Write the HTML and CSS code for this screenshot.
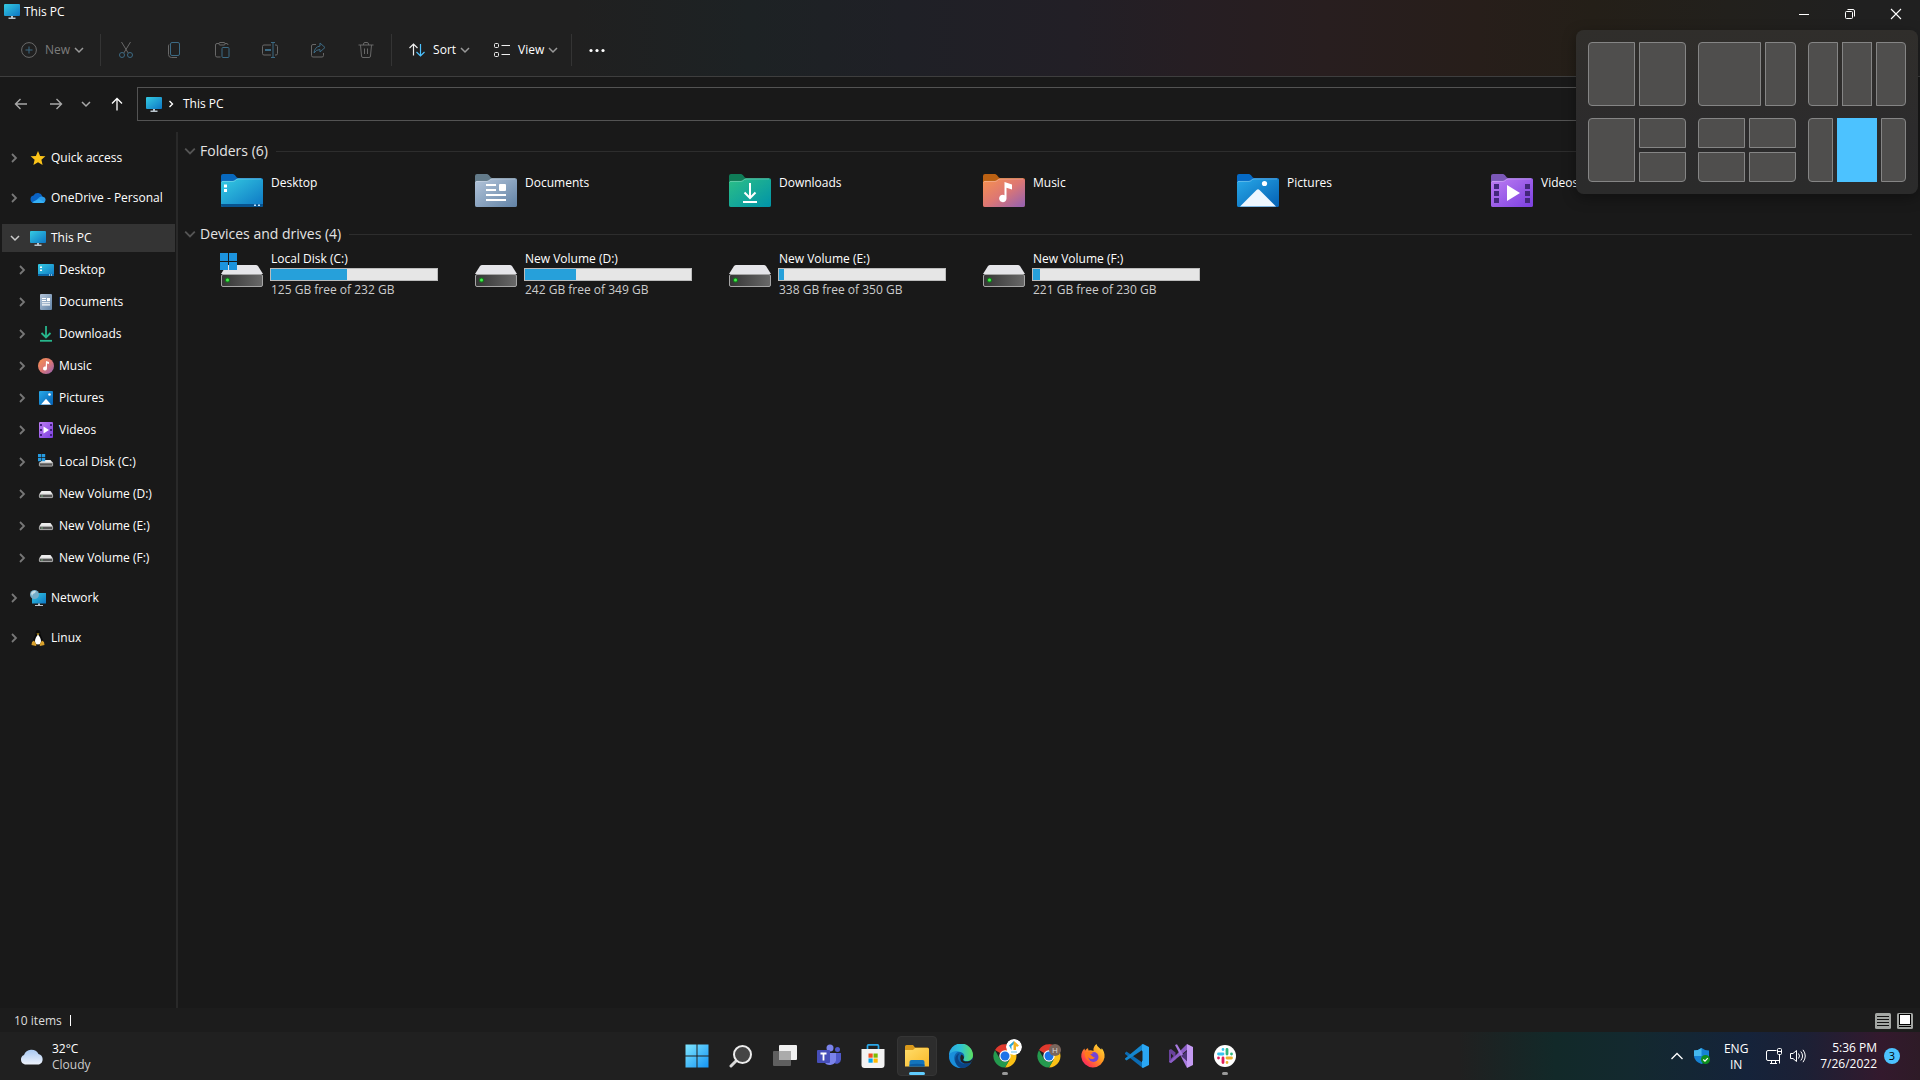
FILE: index.html
```html
<!DOCTYPE html>
<html lang="en">
<head>
<meta charset="utf-8">
<meta name="viewport" content="width=device-width, initial-scale=1">
<title>This PC</title>
<link rel="stylesheet" href="styles.css">
</head>
<body>
<svg class="sprite" aria-hidden="true">
  <defs>
    <linearGradient id="g-screen" x1="0" y1="0" x2="1" y2="1"><stop offset="0" stop-color="#35cbe2"/><stop offset="1" stop-color="#0d76c4"/></linearGradient>
    <linearGradient id="g-docs" x1="0" y1="0" x2="1" y2="1"><stop offset="0" stop-color="#b4c5da"/><stop offset="1" stop-color="#6283a6"/></linearGradient>
    <linearGradient id="g-down" x1="0" y1="0" x2="1" y2="1"><stop offset="0" stop-color="#2cbf86"/><stop offset="1" stop-color="#0093a9"/></linearGradient>
    <linearGradient id="g-music" x1="0" y1="0" x2="1" y2="1"><stop offset="0" stop-color="#f7924f"/><stop offset=".5" stop-color="#dd7773"/><stop offset="1" stop-color="#9160b4"/></linearGradient>
    <linearGradient id="g-pics" x1="0" y1="0" x2="1" y2="1"><stop offset="0" stop-color="#28a9e8"/><stop offset="1" stop-color="#0460b4"/></linearGradient>
    <linearGradient id="g-vids" x1="0" y1="0" x2="1" y2="1"><stop offset="0" stop-color="#bd7df2"/><stop offset="1" stop-color="#7b3fe0"/></linearGradient>
    <linearGradient id="g-disk" x1="0" y1="0" x2="1" y2="0"><stop offset="0" stop-color="#353535"/><stop offset="1" stop-color="#696969"/></linearGradient>
    <linearGradient id="g-win" x1="0" y1="0" x2="1" y2="1"><stop offset="0" stop-color="#7fe6ff"/><stop offset="1" stop-color="#1494f4"/></linearGradient>
    <linearGradient id="g-cloud" x1="0" y1="0" x2="0" y2="1"><stop offset="0" stop-color="#a9c9f2"/><stop offset="1" stop-color="#eef3fc"/></linearGradient>
    <linearGradient id="g-folder" x1="0" y1="0" x2="1" y2="1"><stop offset="0" stop-color="#ffdd6b"/><stop offset="1" stop-color="#f9b928"/></linearGradient>
    <linearGradient id="g-edge1" x1="0" y1="0" x2="1" y2="0"><stop offset="0" stop-color="#2aa6e4"/><stop offset=".5" stop-color="#2fc3d2"/><stop offset="1" stop-color="#5ee05c"/></linearGradient>
    <linearGradient id="g-fire" x1="1" y1="0" x2="0" y2="1"><stop offset="0" stop-color="#ffe63c"/><stop offset=".45" stop-color="#ff9420"/><stop offset=".8" stop-color="#ff3850"/><stop offset="1" stop-color="#f02a8c"/></linearGradient>

    <symbol id="chev-right" viewBox="0 0 8 10"><path d="M2 1l4 4-4 4" fill="none" stroke="currentColor" stroke-width="1.8"/></symbol>
    <symbol id="chev-down" viewBox="0 0 10 8"><path d="M1 2l4 4 4-4" fill="none" stroke="currentColor" stroke-width="1.5"/></symbol>
    <symbol id="pc" viewBox="0 0 16 16"><rect y="1" width="16" height="12" rx="1" fill="url(#g-screen)"/><path d="M7 13h2v1.500h2.500V16h-7v-1.500H7z" fill="#b9c4cc"/></symbol>
    <symbol id="star" viewBox="0 0 16 16"><path d="M8 1l2.100 4.900 5.300.400-4 3.500 1.200 5.200L8 12.200 3.400 15l1.200-5.200-4-3.500 5.300-.400z" fill="#fcc419"/></symbol>
    <symbol id="onedrive" viewBox="0 0 16 16"><path d="M4 13a3.800 3.800 0 0 1-.500-7.500 5 5 0 0 1 9 .9L8 13z" fill="#0a63c4"/><path d="M3 13l5-4.500a5 5 0 0 1 5-1.800A3.200 3.200 0 0 1 13 13z" fill="#2a9be8"/><path d="M2 12.200L9 9l5.500 3.300a3 3 0 0 1-1.500.7H4z" fill="#35b0f5"/></symbol>
    <symbol id="desk" viewBox="0 0 16 16"><rect y="2" width="16" height="12" rx="1" fill="url(#g-screen)"/><path d="M0 12h16v1a1 1 0 0 1-1 1H1a1 1 0 0 1-1-1z" fill="#0b64a4"/><path d="M2 4.500h2v1.500H2zM2 7.500h2V9H2zM11 12.500h1v1h-1zM13 12.500h1v1h-1z" fill="#fff"/></symbol>
    <symbol id="doc" viewBox="0 0 16 16"><rect x="2" width="12" height="16" rx="1" fill="url(#g-docs)"/><path d="M4 4.500h4M4 6.500h4M4 8.700h8M4 10.900h8" stroke="#fff" stroke-width="1.100"/><path d="M9 4h3v3.200H9z" fill="#fff"/></symbol>
    <symbol id="dl" viewBox="0 0 16 16"><path d="M8 0v11M3.500 7L8 11.500 12.500 7" fill="none" stroke="#27b68c" stroke-width="1.800"/><path d="M2 14.800h12" stroke="#27b68c" stroke-width="1.800"/></symbol>
    <symbol id="note" viewBox="0 0 16 16"><circle cx="8" cy="8" r="8" fill="url(#g-music)"/><path d="M8 3l3 1v2L9 5.500v5a2 2 0 1 1-1.300-1.900z" fill="#fff"/></symbol>
    <symbol id="pic" viewBox="0 0 16 16"><rect x="1" y="1" width="14" height="14" rx="1" fill="url(#g-pics)"/><path d="M3 14.500l5-5.800 5 5.800z" fill="#fff"/><circle cx="11.500" cy="4.500" r="1.300" fill="#fff"/></symbol>
    <symbol id="vid" viewBox="0 0 16 16"><rect x="1" width="14" height="16" rx="1" fill="url(#g-vids)"/><path d="M2 2h2v2H2zM2 7h2v2H2zM2 12h2v2H2zM12 2h2v2h-2zM12 7h2v2h-2zM12 12h2v2h-2z" fill="#41217e"/><path d="M5.500 4.500l5.500 3.500-5.500 3.500z" fill="#fff"/></symbol>
    <symbol id="disk" viewBox="0 0 16 16"><path d="M3.500 5h9L15 8.500H1z" fill="#ececec"/><rect x="1.400" y="8.400" width="13.200" height="3.200" rx=".5" fill="#555" stroke="#bbb" stroke-width=".9"/><path d="M3.500 9.500h1v1h-1z" fill="#8dfc9a"/></symbol>
    <symbol id="sysdisk" viewBox="0 0 16 16"><path d="M5 6h7.500L15 9H1z" fill="#ececec"/><rect x="1.400" y="8.900" width="13.200" height="3.200" rx=".5" fill="#555" stroke="#bbb" stroke-width=".9"/><path d="M0 0h3.300v3.300H0zM3.900 0h3.300v3.300H3.900zM0 3.900h3.300v3.300H0zM3.900 3.900h3.300v3.300H3.900z" fill="#269be0"/></symbol>
    <symbol id="net" viewBox="0 0 16 16"><rect x="2" y="3" width="14" height="10.500" fill="url(#g-screen)"/><path d="M8 13.500h2v1.500h3v1H5v-1h3z" fill="#b9c4cc"/><circle cx="4.500" cy="4.500" r="4.500" fill="#74aeca"/><path d="M1 3q2-3 5-2l-1 2-2 1-1 2z" fill="#c6dfe8"/></symbol>
    <symbol id="tux" viewBox="0 0 16 16"><path d="M8 0c2 0 2.500 1.500 2.500 4 .5 2.500 3 5 2.500 8l-3 3H6l-3-3c-.5-3 2-5.500 2.500-8C5.500 1.500 6 0 8 0z" fill="#0a0a0a"/><path d="M8 4.500c1.500 2 3 4 3 6.500s-1 3.500-3 3.500-3-1-3-3.500 1.500-4.500 3-6.500z" fill="#fff"/><path d="M6.500 3.500h3L8 5.200z" fill="#e9b81c"/><path d="M4 10.500l2.500 4-.5 1.500-4.500-1 .5-3zM12 10.500l-2.500 4 .5 1.500 4.500-1-.5-3z" fill="#d9a12b"/></symbol>

    <symbol id="f-base" viewBox="0 0 42 33"><path d="M0 2a2 2 0 0 1 2-2h10c2 0 3.500 4 5 4H40a2 2 0 0 1 2 2v25a2 2 0 0 1-2 2H2a2 2 0 0 1-2-2z"/></symbol>
    <symbol id="f-front" viewBox="0 0 42 33"><path d="M0 9a2 2 0 0 1 2-2h10c2 0 3-2.500 5-2.500H40a2 2 0 0 1 2 2V31a2 2 0 0 1-2 2H2a2 2 0 0 1-2-2z"/><path d="M.5 8.500Q1 7.400 2 7.400h10c2 0 3-2.500 5-2.500H40" fill="none" stroke="#fff" stroke-opacity=".35" stroke-width=".8"/></symbol>
    <symbol id="drive" viewBox="0 0 42 34"><path d="M7 12h28q1 0 2 1l5 8H0l5-8q1-1 2-1z" fill="#e5e5e9"/><rect x=".5" y="21.500" width="41" height="12" rx="1.500" fill="url(#g-disk)" stroke="#a5a5a5"/><circle cx="6.500" cy="27" r="2.600" fill="#14751d"/><circle cx="6.500" cy="27" r="1.500" fill="#43f04a"/></symbol>
    <symbol id="chrome" viewBox="0 0 24 24"><path d="M12 12L2 6.100A11.500 11.500 0 0 1 22 6.200z" fill="#e0392d"/><path d="M12 .5A11.500 11.500 0 0 1 22 6.300H12z" fill="#e0392d"/><path d="M12 6.300h10A11.500 11.500 0 0 1 12 23.500l5-8.700z" fill="#fbc116"/><path d="M2 6.200l5 8.700a5.800 5.800 0 0 0 10 0l-5 8.600A11.500 11.500 0 0 1 2 6.200z" fill="#249a4e"/><circle cx="12" cy="12" r="5.700" fill="#fff"/><circle cx="12" cy="12" r="4.500" fill="#1c73e8"/></symbol>
  </defs>
</svg>

<div class="desktop">
  <header class="header">
    <div class="titlebar">
      <svg class="ico"><use href="#pc"/></svg>
      <h1 class="title">This PC</h1>
      <div class="window-buttons">
        <button class="win-btn" aria-label="Minimize"><svg class="ico-s" viewBox="0 0 12 12"><path d="M1 6.500h10" stroke="#fff"/></svg></button>
        <button class="win-btn" aria-label="Restore"><svg class="ico-s" viewBox="0 0 12 12" fill="none" stroke="#fff"><rect x="1.500" y="3.500" width="7" height="7" rx="1"/><path d="M3.500 1.500H9A1.500 1.500 0 0 1 10.500 3v5.500"/></svg></button>
        <button class="win-btn" aria-label="Close"><svg class="ico-s" viewBox="0 0 12 12"><path d="M1 1l10 10M11 1L1 11" stroke="#fff" stroke-width="1.100"/></svg></button>
      </div>
    </div>

    <div class="toolbar" role="toolbar" aria-label="Commands">
      <button class="tool tool-new" disabled>
        <svg class="ico" viewBox="0 0 16 16" fill="none"><circle cx="8" cy="8" r="7.400" stroke="#6a6a6a"/><path d="M8 4.500v7M4.500 8h7" stroke="#3c6a84"/></svg>
        <span>New</span><svg class="chev"><use href="#chev-down"/></svg>
      </button>
      <span class="sep"></span>
      <button class="tool tool-icon" disabled aria-label="Cut"><svg class="ico" viewBox="0 0 16 16" fill="none"><path d="M3.500 0l6.700 11M12.500 0L5.800 11" stroke="#686868"/><circle cx="4" cy="13" r="2.500" stroke="#3c6a84"/><circle cx="12" cy="13" r="2.500" stroke="#3c6a84"/></svg></button>
      <button class="tool tool-icon" disabled aria-label="Copy"><svg class="ico" viewBox="0 0 16 16" fill="none"><path d="M3 2.500Q2.500 3 2.500 4v8.500a3 3 0 0 0 3 3H11" stroke="#686868"/><rect x="4.500" y=".5" width="9" height="13" rx="1.500" stroke="#3c6a84"/></svg></button>
      <button class="tool tool-icon" disabled aria-label="Paste"><svg class="ico" viewBox="0 0 16 16" fill="none"><path d="M5 1.500H3A1.500 1.500 0 0 0 1.500 3v10.500A1.500 1.500 0 0 0 3 15h3.500M11 1.500h2A1.500 1.500 0 0 1 14 3" stroke="#686868"/><rect x="5" y=".5" width="6" height="2.500" rx="1" stroke="#686868"/><rect x="8" y="5.500" width="7" height="10" rx="1" stroke="#3c6a84"/></svg></button>
      <button class="tool tool-icon" disabled aria-label="Rename"><svg class="ico" viewBox="0 0 16 16" fill="none"><path d="M9 3H2A1.500 1.500 0 0 0 .5 4.500v7A1.500 1.500 0 0 0 2 13h7M13 3h1a1.500 1.500 0 0 1 1.500 1.500v7A1.500 1.500 0 0 1 14 13h-1" stroke="#686868"/><path d="M11 .5v15M9 .5h4M9 15.500h4" stroke="#3c6a84"/><path d="M3 8h6" stroke="#3c6a84" stroke-width="2"/></svg></button>
      <button class="tool tool-icon" disabled aria-label="Share"><svg class="ico" viewBox="0 0 16 16" fill="none"><path d="M6 2.500H3A1.500 1.500 0 0 0 1.500 4v9.500A1.500 1.500 0 0 0 3 15h9a1.500 1.500 0 0 0 1.500-1.500V11" stroke="#686868"/><path d="M10 1l5 4.500L10 10V7.500Q6 7.500 4 11q.5-6 6-7z" stroke="#3c6a84"/></svg></button>
      <button class="tool tool-icon" disabled aria-label="Delete"><svg class="ico" viewBox="0 0 16 16" fill="none" stroke="#686868"><path d="M.5 3h15M5.500 3V2a1.500 1.500 0 0 1 1.500-1.500h2A1.500 1.500 0 0 1 10.500 2v1M2.500 3l1 11a1.500 1.500 0 0 0 1.500 1.500h6a1.500 1.500 0 0 0 1.500-1.500l1-11M6.500 6.500v5.500M9.500 6.500v5.500"/></svg></button>
      <span class="sep"></span>
      <button class="tool tool-menu">
        <svg class="ico" viewBox="0 0 16 16" fill="none"><path d="M4.500 13.500V2M.5 6l4-4 4 4" stroke="#eee" stroke-width="1.200"/><path d="M11.500 2v12M7.500 10l4 4 4-4" stroke="#4cc2ff" stroke-width="1.200"/></svg>
        <span>Sort</span><svg class="chev"><use href="#chev-down"/></svg>
      </button>
      <button class="tool tool-menu">
        <svg class="ico" viewBox="0 0 16 16" fill="none" stroke="#eee"><rect x=".5" y="1.500" width="4" height="4" rx="1"/><rect x=".5" y="10.500" width="4" height="4" rx="1"/><path d="M7.500 3.500H16M7.500 12.500H16"/></svg>
        <span>View</span><svg class="chev"><use href="#chev-down"/></svg>
      </button>
      <span class="sep"></span>
      <button class="tool tool-icon" aria-label="See more"><svg class="ico" viewBox="0 0 16 16" fill="#fff"><circle cx="2" cy="8.500" r="1.600"/><circle cx="8" cy="8.500" r="1.600"/><circle cx="14" cy="8.500" r="1.600"/></svg></button>
    </div>
  </header>

  <nav class="addressbar" aria-label="Location">
    <button class="nav-btn" aria-label="Back"><svg class="ico-m" viewBox="0 0 14 14"><path d="M13 7H1.500M6.500 2l-5 5 5 5" fill="none" stroke="#a8a8a8" stroke-width="1.400"/></svg></button>
    <button class="nav-btn" aria-label="Forward"><svg class="ico-m" viewBox="0 0 14 14"><path d="M1 7h11.500M7.500 2l5 5-5 5" fill="none" stroke="#a8a8a8" stroke-width="1.400"/></svg></button>
    <button class="nav-btn nav-btn-narrow" aria-label="Recent locations"><svg class="chev-grey"><use href="#chev-down"/></svg></button>
    <button class="nav-btn" aria-label="Up"><svg class="ico-m" viewBox="0 0 14 14"><path d="M7 13.500V1.500M2 6.500l5-5 5 5" fill="none" stroke="#fff" stroke-width="1.300"/></svg></button>
    <div class="address">
      <svg class="ico"><use href="#pc"/></svg>
      <svg class="crumb"><use href="#chev-right"/></svg>
      <a href="#" class="crumb-link">This PC</a>
    </div>
  </nav>

  <div class="body">
    <nav class="sidebar" aria-label="Folders">
      <ul class="tree">
        <li><a class="node" href="#"><svg class="twist"><use href="#chev-right"/></svg><svg class="ico"><use href="#star"/></svg>Quick access</a></li>
        <li><a class="node" href="#"><svg class="twist"><use href="#chev-right"/></svg><svg class="ico"><use href="#onedrive"/></svg>OneDrive - Personal</a></li>
        <li>
          <a class="node selected" href="#" aria-current="page"><svg class="twist twist-open"><use href="#chev-down"/></svg><svg class="ico"><use href="#pc"/></svg>This PC</a>
          <ul class="subtree">
            <li><a class="node" href="#"><svg class="twist"><use href="#chev-right"/></svg><svg class="ico"><use href="#desk"/></svg>Desktop</a></li>
            <li><a class="node" href="#"><svg class="twist"><use href="#chev-right"/></svg><svg class="ico"><use href="#doc"/></svg>Documents</a></li>
            <li><a class="node" href="#"><svg class="twist"><use href="#chev-right"/></svg><svg class="ico"><use href="#dl"/></svg>Downloads</a></li>
            <li><a class="node" href="#"><svg class="twist"><use href="#chev-right"/></svg><svg class="ico"><use href="#note"/></svg>Music</a></li>
            <li><a class="node" href="#"><svg class="twist"><use href="#chev-right"/></svg><svg class="ico"><use href="#pic"/></svg>Pictures</a></li>
            <li><a class="node" href="#"><svg class="twist"><use href="#chev-right"/></svg><svg class="ico"><use href="#vid"/></svg>Videos</a></li>
            <li><a class="node" href="#"><svg class="twist"><use href="#chev-right"/></svg><svg class="ico"><use href="#sysdisk"/></svg>Local Disk (C:)</a></li>
            <li><a class="node" href="#"><svg class="twist"><use href="#chev-right"/></svg><svg class="ico"><use href="#disk"/></svg>New Volume (D:)</a></li>
            <li><a class="node" href="#"><svg class="twist"><use href="#chev-right"/></svg><svg class="ico"><use href="#disk"/></svg>New Volume (E:)</a></li>
            <li><a class="node" href="#"><svg class="twist"><use href="#chev-right"/></svg><svg class="ico"><use href="#disk"/></svg>New Volume (F:)</a></li>
          </ul>
        </li>
        <li><a class="node" href="#"><svg class="twist"><use href="#chev-right"/></svg><svg class="ico"><use href="#net"/></svg>Network</a></li>
        <li><a class="node" href="#"><svg class="twist"><use href="#chev-right"/></svg><svg class="ico"><use href="#tux"/></svg>Linux</a></li>
      </ul>
    </nav>

    <main class="content">
      <section>
        <h2 class="group-title"><svg class="group-chev"><use href="#chev-down"/></svg>Folders (6)</h2>
        <div class="grid folders">
          <a class="item" href="#"><svg class="folder" viewBox="0 0 42 33"><use href="#f-base" fill="#0868bd"/><use href="#f-front" fill="url(#g-screen)"/><path d="M0 30h42v1a2 2 0 0 1-2 2H2a2 2 0 0 1-2-2z" fill="#08538f"/><path d="M3 10.500h3v3H3zM3 15h3v3H3z" fill="#fff"/><path d="M33 30.500h2v1.500h-2zM37 30.500h2v1.500h-2z" fill="#bfe4ff"/></svg><span>Desktop</span></a>
          <a class="item" href="#"><svg class="folder" viewBox="0 0 42 33"><use href="#f-base" fill="#637b8a"/><use href="#f-front" fill="url(#g-docs)"/><path d="M11 11h10M11 16h10M11 21h20M11 26h20" stroke="#fff" stroke-width="2"/><rect x="24" y="10" width="7" height="7" rx="1" fill="#fff"/></svg><span>Documents</span></a>
          <a class="item" href="#"><svg class="folder" viewBox="0 0 42 33"><use href="#f-base" fill="#0f7c57"/><use href="#f-front" fill="url(#g-down)"/><path d="M21 9v15M15.500 18.500l5.500 5.500 5.500-5.500M14 28h14" fill="none" stroke="#fff" stroke-width="2"/></svg><span>Downloads</span></a>
          <a class="item" href="#"><svg class="folder" viewBox="0 0 42 33"><use href="#f-base" fill="#bb6113"/><use href="#f-front" fill="url(#g-music)"/><path d="M21.500 8l7.500 2.500v5l-5.500-1.800v11a3.700 3.700 0 1 1-2-3.500z" fill="#fff"/></svg><span>Music</span></a>
          <a class="item" href="#"><svg class="folder" viewBox="0 0 42 33"><use href="#f-base" fill="#056ac6"/><use href="#f-front" fill="url(#g-pics)"/><path d="M3 32.500L19.500 16q1.500-1.500 3 0L39 32.500z" fill="#eef7ff"/><circle cx="27.500" cy="9.500" r="2.600" fill="#fff"/></svg><span>Pictures</span></a>
          <a class="item" href="#"><svg class="folder" viewBox="0 0 42 33"><use href="#f-base" fill="#7b58b8"/><use href="#f-front" fill="url(#g-vids)"/><path d="M3 10h5v5H3zM3 17h5v5H3zM3 24h5v5H3zM34 10h5v5h-5zM34 17h5v5h-5zM34 24h5v5h-5z" fill="#43277c"/><path d="M16 11l13 8-13 8z" fill="#fff"/></svg><span>Videos</span></a>
        </div>
      </section>

      <section>
        <h2 class="group-title"><svg class="group-chev"><use href="#chev-down"/></svg>Devices and drives (4)</h2>
        <div class="grid drives">
          <a class="item" href="#">
            <svg class="drive" viewBox="0 0 42 34"><use href="#drive"/><path d="M-1 0h8v8h-8zM8 0h8v8H8zM-1 9h8v8h-8zM8 9h8v8H8z" fill="#1c93dd"/></svg>
            <span class="drive-info"><span>Local Disk (C:)</span><span class="bar"><span class="fill" style="width:46%"></span></span><span class="free">125 GB free of 232 GB</span></span>
          </a>
          <a class="item" href="#">
            <svg class="drive"><use href="#drive"/></svg>
            <span class="drive-info"><span>New Volume (D:)</span><span class="bar"><span class="fill" style="width:31%"></span></span><span class="free">242 GB free of 349 GB</span></span>
          </a>
          <a class="item" href="#">
            <svg class="drive"><use href="#drive"/></svg>
            <span class="drive-info"><span>New Volume (E:)</span><span class="bar"><span class="fill" style="width:3%"></span></span><span class="free">338 GB free of 350 GB</span></span>
          </a>
          <a class="item" href="#">
            <svg class="drive"><use href="#drive"/></svg>
            <span class="drive-info"><span>New Volume (F:)</span><span class="bar"><span class="fill" style="width:4%"></span></span><span class="free">221 GB free of 230 GB</span></span>
          </a>
        </div>
      </section>
    </main>
  </div>

  <footer class="status">
    <span class="count">10 items</span>
    <div class="view-modes">
      <button class="mode" aria-label="Details view"><svg class="ico" viewBox="0 0 16 16"><rect width="16" height="16" rx="1.500" fill="#a3a6a3"/><path d="M2 3.500h12M2 6.500h12M2 9.500h12M2 12.500h12" stroke="#111"/></svg></button>
      <button class="mode" aria-label="Large icons view"><svg class="ico" viewBox="0 0 16 16"><rect width="16" height="16" rx="1.500" fill="#a3a6a3"/><rect x="2.500" y="1.500" width="11" height="10" fill="#fff" stroke="#000"/><path d="M2 13.500h12" stroke="#000"/></svg></button>
    </div>
  </footer>

  <footer class="taskbar">
    <button class="weather">
      <svg class="weather-ico" viewBox="0 0 24 16"><path d="M5 15.500a5 5 0 0 1-1-9.500 8 8 0 0 1 14.500-1A5.500 5.500 0 0 1 19 15.500z" fill="url(#g-cloud)"/></svg>
      <span><span class="line">32°C</span><span class="line dim">Cloudy</span></span>
    </button>

    <div class="apps">
      <button class="app" aria-label="Start"><svg viewBox="0 0 24 24"><path d="M.5.500h11v11H.5zM12.500.5h11v11h-11zM.5 12.500h11v11H.5zM12.500 12.500h11v11h-11z" fill="url(#g-win)"/></svg></button>
      <button class="app" aria-label="Search"><svg viewBox="0 0 24 24"><path d="M8 16l-6 6" stroke="#d8d8d8" stroke-width="3" stroke-linecap="round"/><circle cx="13.500" cy="10.500" r="8.500" fill="#454545" stroke="#ededed" stroke-width="2"/></svg></button>
      <button class="app" aria-label="Task view"><svg viewBox="0 0 24 24"><rect x="6" y="1" width="18" height="15" rx="1" fill="#f0f0f0"/><rect y="7" width="18" height="15" rx="1" fill="#5f5f5f"/><path d="M6 7h12v9H6z" fill="#ababab"/></svg></button>
      <button class="app" aria-label="Teams"><svg viewBox="0 0 24 24"><circle cx="13" cy="4" r="3.500" fill="#7b83eb"/><circle cx="20.500" cy="5.500" r="2.500" fill="#5059c9"/><path d="M16 9h8v6a4.500 4.500 0 0 1-8 3z" fill="#5059c9"/><path d="M7 9h12v7.500a6.500 6.500 0 0 1-12 1z" fill="#7b83eb"/><rect y="6" width="13" height="13" rx="1" fill="#464eb8"/><path d="M3.500 9.500h6M6.500 9.500v7" stroke="#fff" stroke-width="1.800"/></svg></button>
      <button class="app" aria-label="Store"><svg viewBox="0 0 24 24"><path d="M6.500 6V2q0-1.200 1.200-1.200h8.600q1.200 0 1.200 1.200v4" fill="none" stroke="#2aa7e8" stroke-width="1.700"/><path d="M.5 5h23v16a3 3 0 0 1-3 3h-17a3 3 0 0 1-3-3z" fill="#f3f3f3"/><path d="M7.500 9.500h4.200v4.200H7.500z" fill="#f25022"/><path d="M12.500 9.500h4.200v4.200h-4.200z" fill="#7fba00"/><path d="M7.500 14.500h4.200v4.200H7.500z" fill="#00a4ef"/><path d="M12.500 14.500h4.200v4.200h-4.200z" fill="#ffb900"/></svg></button>
      <button class="app active" aria-label="File Explorer"><svg viewBox="0 0 24 24"><path d="M0 2.500A1.500 1.500 0 0 1 1.500 1H8l2 2.500h12.500A1.500 1.500 0 0 1 24 5v8H0z" fill="#d9991b"/><path d="M0 6h8l2-2h12.500A1.500 1.500 0 0 1 24 5.500v17H0z" fill="url(#g-folder)"/><path d="M4.500 22.500V18a2 2 0 0 1 2-2h11a2 2 0 0 1 2 2v4.500z" fill="#1375bd"/><path d="M4.500 22.500h15v-2q-7.500-1.500-15 0z" fill="#0b5ba0"/></svg></button>
      <button class="app" aria-label="Edge"><svg viewBox="0 0 24 24"><circle cx="12" cy="12" r="12" fill="#0d61ad"/><path d="M0 12A12 12 0 0 1 24 11c0 4-3 6-6 6-2.500 0-4-.8-3.500-2 1.500-2 1-6-3-7C6 7 1 9 0 12z" fill="url(#g-edge1)"/><path d="M0 12C1 8 6 6.500 10 7.500c-4 1-5.500 5-4.500 9 1 3.500 4 6.500 7.500 7.400C5.500 24.500 0 19 0 12z" fill="#1a8fdb"/><path d="M11 9c-2 1.500-3 5-1 8s6.500 4 11 2l1.500-.8A12 12 0 0 1 12 24C5 22 4 11 11 9z" fill="#0a4385"/><path d="M14.500 15c-1.500 1.500 1 3 4 2.500 2.500-.3 4.500-1.500 5.200-3.500-.2 2-1 3.500-2 4.500-4 2-8.500 1-9.800-1.500q-1.500-4 .6-6.500 3.500 2 2 4.500z" fill="#202020"/></svg></button>
      <button class="app running" aria-label="Chrome, work profile"><svg viewBox="0 0 24 24"><use href="#chrome"/></svg><svg class="profile profile-large" viewBox="0 0 16 16"><circle cx="8" cy="8" r="8" fill="#fff"/><path d="M3 6.500L8 2v3L5.500 7v4z" fill="#27a5df"/><path d="M8 2l5 4.500L11 8 10 7v4H7.500V5z" fill="#f4b223"/><path d="M5 13h6" stroke="#69bfe6"/></svg></button>
      <button class="app" aria-label="Chrome, profile H"><svg viewBox="0 0 24 24"><use href="#chrome"/></svg><span class="profile">H</span></button>
      <button class="app" aria-label="Firefox"><svg viewBox="0 0 24 24"><path d="M15.500 0c.5 2.500 3 3.500 4.500 5.500 1-.2.500-1 .5-1.500 2 2 3.500 5.500 3 9.500A11.700 11.700 0 0 1 .3 13C0 9 1.500 6.500 3.500 4.500l.5 2.200C5 5 6 4.500 7 4.200L7.500 6.500q3-.5 5 .5c-.5-3 1-5.500 3-7z" fill="url(#g-fire)"/><circle cx="12.500" cy="13" r="5" fill="#7542d6"/><path d="M4 8c4 0 5-1 9 1-2 0-2.500 1-4 2 2 0 2 2 5 2.500-3 3-7 1-7.500-2-.5 2 1 5 3.500 6-5-.5-7-6-6-9.500z" fill="#ff7a1c"/></svg></button>
      <button class="app" aria-label="VS Code"><svg viewBox="0 0 24 24"><path d="M0 9l1.500-1.500L18 19v5l-1-.5L0 10z" fill="#0b6cb4"/><path d="M0 14.500L17 .5 18 0v5.500L1.500 16.500 0 15.300z" fill="#1486ce"/><path d="M18 0l6 3v18l-6 3-1-.7V.700z" fill="#2aa7f4"/><path d="M17.500 7v10L11 12z" fill="#202020"/></svg></button>
      <button class="app" aria-label="Visual Studio"><svg viewBox="0 0 24 24"><path d="M0 6l2-1 4.500 3.500v7L2 19l-2-1z" fill="#69429c"/><path d="M2 9.500v5L4.500 12z" fill="#202020"/><path d="M0 18l2 1L18 6V0z" fill="#8b5ec5"/><path d="M6 1L8 .3 19 19l-1 5z" fill="#a97be0"/><path d="M18 0l6 3v18l-6 3z" fill="#c49af2"/><path d="M18 7v10l-6-5z" fill="#4e3579"/></svg></button>
      <button class="app running" aria-label="Slack"><svg viewBox="0 0 24 24"><circle cx="12" cy="12" r="11" fill="#fff"/><g stroke-width="2.800" stroke-linecap="round"><path d="M10 5.500v0M5.500 10H10" stroke="#36c5f0"/><path d="M14 5.500V10M18.500 10v0" stroke="#2eb67d"/><path d="M14 14h4.500M14 18.500v0" stroke="#ecb22e"/><path d="M10 14v4.500M5.500 14v0" stroke="#e01e5a"/></g></svg></button>
    </div>

    <div class="tray">
      <button class="tray-btn" aria-label="Show hidden icons"><svg class="ico-m" viewBox="0 0 14 14"><path d="M1.500 10L7 4.500l5.500 5.500" fill="none" stroke="#fff" stroke-width="1.300"/></svg></button>
      <button class="tray-btn" aria-label="Windows Security"><svg class="ico" viewBox="0 0 16 16"><path d="M7.500 0Q11 2.500 15 2.500V8q0 5-7.500 8Q0 13 0 8V2.500Q4 2.500 7.500 0z" fill="#1682d4"/><path d="M7.500 0v8H0V2.500Q4 2.500 7.500 0z" fill="#45b9ef"/><circle cx="11.500" cy="11.500" r="4.500" fill="#0e8f1e"/><path d="M9.300 11.500l1.700 1.700 2.800-3" fill="none" stroke="#fff" stroke-width="1.200"/></svg></button>
      <button class="tray-btn lang"><span class="line">ENG</span><span class="line">IN</span></button>
      <button class="tray-btn sound" aria-label="Network and volume">
        <svg class="ico" viewBox="0 0 16 16" fill="none" stroke="#fff"><path d="M10.500 2.500H2A1.500 1.500 0 0 0 .5 4v7A1.500 1.500 0 0 0 2 12.500h11.500M4 15.500h7M5.500 12.500v3M9.500 12.500v3M13.500 6.500v9"/><rect x="11.500" y=".5" width="4" height="6" rx="1"/><path d="M12 3.500h3"/></svg>
        <svg class="ico" viewBox="0 0 16 16" fill="none" stroke="#fff"><path d="M.5 5.500h2.500l3.500-3v11l-3.500-3H.5zM8.500 5.500q2 2.500 0 5M10.800 3.500q3.500 4.500 0 9M13 1.800q4.500 6.200 0 12.400"/></svg>
      </button>
      <button class="tray-btn clock"><span class="line">5:36 PM</span><span class="line">7/26/2022</span></button>
      <button class="tray-btn count-badge" aria-label="3 notifications">3</button>
    </div>
  </footer>

  <div class="snap" role="group" aria-label="Snap layouts">
    <div class="layout halves"><button class="zone r-left" aria-label="Left half"></button><button class="zone r-right" aria-label="Right half"></button></div>
    <div class="layout wide-left"><button class="zone r-left" aria-label="Left two thirds"></button><button class="zone r-right" aria-label="Right third"></button></div>
    <div class="layout thirds"><button class="zone r-left" aria-label="Left third"></button><button class="zone" aria-label="Middle third"></button><button class="zone r-right" aria-label="Right third"></button></div>
    <div class="layout halves"><button class="zone r-left tall" aria-label="Left half"></button><button class="zone r-tr" aria-label="Top right"></button><button class="zone r-br" aria-label="Bottom right"></button></div>
    <div class="layout halves"><button class="zone r-tl" aria-label="Top left"></button><button class="zone r-tr" aria-label="Top right"></button><button class="zone r-bl" aria-label="Bottom left"></button><button class="zone r-br" aria-label="Bottom right"></button></div>
    <div class="layout wide-middle"><button class="zone r-left" aria-label="Left"></button><button class="zone chosen" aria-label="Middle"></button><button class="zone r-right" aria-label="Right"></button></div>
  </div>
</div>
</body>
</html>
```
FILE: styles.css
```css
* { box-sizing: border-box; }

body {
  margin: 0;
  background: #191919;
  color: #fff;
  font: 12px/16px "Open Sans", "Noto Sans", sans-serif;
}

button {
  margin: 0;
  padding: 0;
  border: 0;
  background: none;
  color: inherit;
  font: inherit;
}

a { color: inherit; text-decoration: none; }
svg { display: block; flex: none; }
h1, h2 { margin: 0; font-weight: 400; }
ul { margin: 0; padding: 0; list-style: none; }

.sprite { position: absolute; width: 0; height: 0; }
.ico { width: 16px; height: 16px; }
.ico-m { width: 14px; height: 14px; }
.ico-s { width: 12px; height: 12px; }
.line { display: block; }
.dim { color: #ccc; }

.desktop {
  display: flex;
  flex-direction: column;
  min-height: 100vh;
}

/* Title bar and commands */
.header {
  border-bottom: 1px solid #3e3e3e;
  background: linear-gradient(90deg, #202020 30%, #1d2224 39%, #1f2026 47%, #221f26 56%, #261e23 62%, #281e1f 69%, #271e1a 77%, #241f18 83%, #22201c 90%, #202020 97%);
}

.titlebar {
  display: flex;
  align-items: flex-start;
  height: 28px;
  padding: 3px 1px 0 4px;
}

.title { margin-left: 4px; font-size: 12px; line-height: 17px; }
.window-buttons { display: flex; margin-left: auto; }

.win-btn {
  display: grid;
  place-items: center;
  width: 46px;
  height: 22px;
}

.toolbar {
  display: flex;
  align-items: center;
  height: 48px;
  padding: 0 8px 4px;
}

.tool {
  display: flex;
  align-items: center;
  gap: 8px;
  height: 32px;
}

.tool-new { padding: 0 15px 0 13px; color: #7d7d7d; }
.tool-icon { justify-content: center; width: 48px; }
.tool-menu { padding: 0 12px; }
.sep + .tool-menu { padding-left: 16px; }
.chev { width: 10px; height: 8px; margin-left: -4px; color: #999; }
.chev-grey { width: 10px; height: 8px; color: #a8a8a8; }
.sep { width: 1px; height: 32px; margin: 0 1px; background: #343434; }

/* Location row */
.addressbar {
  display: flex;
  align-items: center;
  padding: 10px 12px 11px 3px;
}

.nav-btn { display: grid; place-items: center; width: 35px; height: 32px; }
.nav-btn-narrow { width: 26px; }

.address {
  display: flex;
  flex: 1;
  align-items: center;
  height: 34px;
  margin-left: 3px;
  padding: 0 8px;
  border: 1px solid #535353;
}

.crumb { width: 6px; height: 8px; margin: 0 9px 0 6px; }

/* Main area */
.body { display: flex; flex: 1; }

.sidebar {
  flex: none;
  width: 178px;
  padding: 12px 1px 12px 2px;
  border-right: 2px solid #292929;
}

.tree { display: grid; gap: 12px; }
.subtree { display: grid; gap: 4px; margin-top: 4px; }

.node {
  display: flex;
  align-items: center;
  height: 28px;
  padding-left: 8px;
  white-space: nowrap;
}

.subtree .node { padding-left: 16px; }
.node .ico { margin: 0 5px 0 12px; }
.twist { width: 8px; height: 10px; color: #777; }
.twist-open { width: 10px; height: 8px; color: #ccc; }
.twist-open + .ico { margin-left: 10px; }
.selected { background: #343434; }

.content { flex: 1; min-width: 0; padding: 7px 8px 0 6px; }

.group-title {
  display: flex;
  align-items: center;
  font-size: 14px;
  line-height: 24px;
  color: #e4e4e4;
}

.group-title::after {
  flex: 1;
  height: 1px;
  margin-left: 8px;
  background: #2d2d2d;
  content: "";
}

.group-chev { width: 12px; height: 10px; margin-right: 4px; color: #555; }

.grid {
  display: grid;
  grid-template-columns: repeat(auto-fill, 254px);
  padding-left: 37px;
}

.item { display: flex; gap: 8px; }
.folders { padding-top: 11px; padding-bottom: 15px; }
.folder { width: 42px; height: 33px; }
.folders .item { line-height: 18px; }
.drives { padding-top: 4px; }
.drive { width: 42px; height: 34px; margin-top: 3px; overflow: visible; }

.drive-info {
  display: flex;
  flex-direction: column;
  gap: 1px;
  width: 167px;
  padding-top: 1px;
  white-space: nowrap;
}

.free { color: #ccc; }

.bar {
  height: 13px;
  margin-left: -1px;
  border: 1px solid #bcbcbc;
  background: #e6e6e6;
}

.fill { display: block; height: 11px; background: #26a0da; }

/* Status bar */
.status {
  display: flex;
  align-items: center;
  justify-content: space-between;
  height: 24px;
  padding: 1px 7px 0 14px;
  background: #1c1c1c;
}

.count { color: #ddd; }

.count::after {
  display: inline-block;
  width: 1px;
  height: 11px;
  margin-left: 8px;
  background: #fff;
  vertical-align: -1px;
  content: "";
}

.view-modes { display: flex; gap: 6px; }

/* Taskbar */
.taskbar {
  display: grid;
  grid-template-columns: 1fr auto 1fr;
  align-items: center;
  height: 48px;
  background: linear-gradient(90deg, #202020 76%, #122929 81%, #13292f 85%, #15233a 91%, #1c2035 94%, #33192d 98%, #2e1b27);
}

.weather {
  display: flex;
  align-items: center;
  justify-self: start;
  gap: 8px;
  padding: 2px 0 0 20px;
  text-align: left;
}

.weather-ico { width: 24px; height: 16px; }
.apps { display: flex; gap: 4px; padding-left: 2px; }

.app {
  position: relative;
  display: grid;
  place-items: center;
  width: 40px;
  height: 40px;
  border-radius: 4px;
}

.app > svg { width: 24px; height: 24px; }
.active { border: 1px solid #353535; background: #2d2d2d; }

.active::after,
.running::after {
  position: absolute;
  bottom: 1px;
  left: 50%;
  width: 6px;
  height: 3px;
  border-radius: 2px;
  background: #999;
  transform: translateX(-50%);
  content: "";
}

.active::after { bottom: 0; width: 16px; background: #60cdff; }

.profile {
  position: absolute;
  top: 8px;
  right: 8px;
  width: 12px;
  height: 12px;
  border-radius: 50%;
  background: #7a655c;
  color: #ddd;
  font-size: 8px;
  line-height: 12px;
}

.app > .profile-large { top: 3px; right: 3px; width: 16px; height: 16px; background: none; }

.tray {
  display: flex;
  align-items: center;
  justify-self: end;
  padding-right: 20px;
}

.tray-btn { margin-left: 10px; }
.lang { width: 32px; padding-top: 2px; text-align: center; }
.sound { display: flex; gap: 8px; margin-left: 14px; }
.clock { margin-left: 14px; text-align: right; }

.count-badge {
  width: 16px;
  height: 16px;
  margin-left: 7px;
  border-radius: 50%;
  background: #4cc2ff;
  color: #000;
  font-size: 11px;
}

/* Snap layouts flyout */
.snap {
  position: absolute;
  top: 30px;
  right: 2px;
  display: grid;
  grid-template-columns: repeat(3, 98px);
  gap: 12px;
  padding: 12px;
  border-radius: 8px;
  background: linear-gradient(#302e2b, #2c2b2c 60%, #2b2b2b);
  box-shadow: 0 4px 14px rgba(0, 0, 0, .35);
}

.layout { display: grid; gap: 4px; height: 64px; }
.halves { grid-template-columns: 1fr 1fr; }
.wide-left { grid-template-columns: 63fr 31fr; }
.thirds { grid-template-columns: 1fr 1fr 1fr; }
.wide-middle { grid-template-columns: 25fr 40fr 25fr; }
.zone { border: 1px solid #858585; background: #4f4e4d; }
.tall { grid-row: span 2; }
.chosen { border-color: #4cc2ff; background: #4cc2ff; }
.r-left { border-radius: 4px 0 0 4px; }
.r-right { border-radius: 0 4px 4px 0; }
.r-tl { border-radius: 4px 0 0 0; }
.r-tr { border-radius: 0 4px 0 0; }
.r-bl { border-radius: 0 0 0 4px; }
.r-br { border-radius: 0 0 4px 0; }
```
